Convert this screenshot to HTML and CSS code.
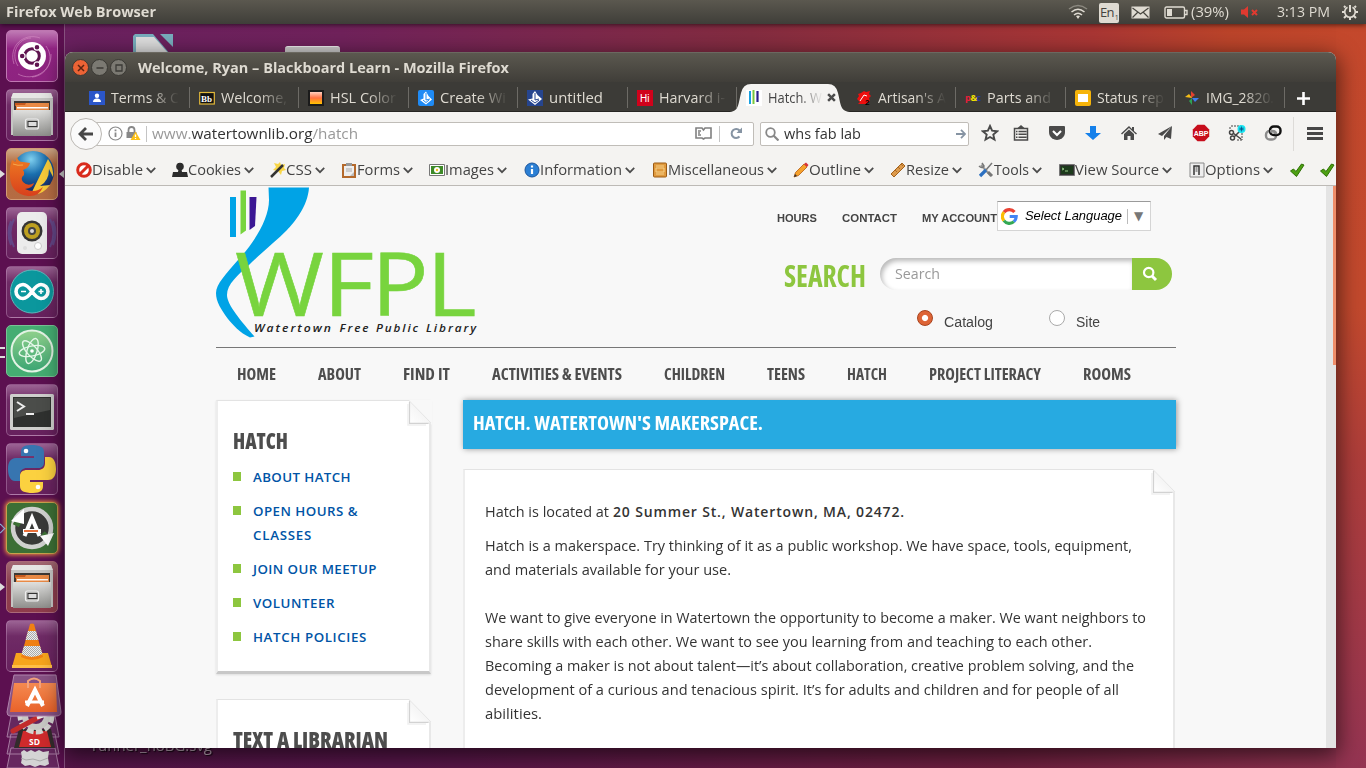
FILE: index.html
```html
<!DOCTYPE html>
<html lang="en">
<head>
<meta charset="utf-8">
<title>Desktop</title>
<link rel="stylesheet" href="styles.css">
</head>
<body>
<svg width="0" height="0" class="defs">
  <defs>
    <linearGradient id="silver" x2="0" y2="1"><stop stop-color="#e0e0de"/><stop offset="1" stop-color="#8f8f8c"/></linearGradient>
    <linearGradient id="orange" x2="0" y2="1"><stop stop-color="#f58a50"/><stop offset="1" stop-color="#e9622a"/></linearGradient>
    <linearGradient id="atom" x2="0" y2="1"><stop stop-color="#8fd08b"/><stop offset="1" stop-color="#3ba573"/></linearGradient>
    <linearGradient id="paper" x1="0" y1="1" x2=".6" y2=".4"><stop stop-color="#fff"/><stop offset="1" stop-color="#f3f3f3"/></linearGradient>
    <radialGradient id="globe" cx=".45" cy=".2" r=".8"><stop stop-color="#7fd0ef"/><stop offset=".45" stop-color="#1a6fae"/><stop offset="1" stop-color="#12235e"/></radialGradient>
    <linearGradient id="fox" x2="0" y2="1"><stop stop-color="#ee7b22"/><stop offset="1" stop-color="#d8401c"/></linearGradient>
    <pattern id="check" width="2" height="2" patternUnits="userSpaceOnUse"><rect width="2" height="2" fill="#eee"/><rect width="1" height="1" fill="#aaa"/><rect x="1" y="1" width="1" height="1" fill="#aaa"/></pattern>
    <symbol id="files" viewBox="0 0 52 52">
      <path d="M7 4h38l2 6v36H5V10z" fill="#c6c6c4"/><path d="M7 4h38l2 5H5z" fill="#e6e6e4"/>
      <path d="M8 12h36v12H8z" fill="#3d3935"/><path d="M9 14h34v3H9z" fill="#c65a1e"/><path d="M10 16h9l1-2h23v10H10z" fill="#e98a45"/><path d="M11 18h31v1.500H11z" fill="#fff"/>
      <path d="M7 21h38v26H7z" fill="url(#silver)"/><rect x="19.500" y="30" width="13" height="10" rx="2" fill="#b5b5b3" stroke="#eee" stroke-width="1.200"/><rect x="22" y="32.500" width="9" height="5" fill="#ddd" stroke="#333"/>
    </symbol>
    <symbol id="chev" viewBox="0 0 9 6"><path d="M.700.700l3.800 3.800L8.300.700" fill="none" stroke="#4c4c4c" stroke-width="1.600"/></symbol>
    <symbol id="tick" viewBox="0 0 16 16"><path d="M1.500 9l3-2 2.500 2.500L12.500 2l2.500 1L7.500 14.500z" fill="#4da012" stroke="#2d6f04"/></symbol>
    <symbol id="corner" viewBox="0 0 26 26"><path d="M3 0h23v25z" fill="#f8f8f8"/><path d="M3.500 1L25 23H3.500z" fill="url(#paper)" stroke="#e6e6e6"/><path d="M3.500 2v21.500h19" fill="none" stroke="#d2d2d2" stroke-width="1.200"/><path d="M2 4v21h18" fill="none" stroke="#f0f0f0" stroke-width="1.500"/></symbol>
  </defs>
</svg>

<div class="panel">
  <b class="fit" data-w="150">Firefox Web Browser</b>
  <div class="tray">
    <svg width="20" height="16" viewBox="0 0 20 16" fill="none" stroke="#dfdbd2" stroke-width="1.500"><path d="M1 5Q10-2 19 5" stroke="#8b887f"/><path d="M3.500 8Q10 2.500 16.500 8M6 11Q10 7.500 14 11"/><path d="M8 12l2 3 2-3q-2-1-4 0z" fill="#dfdbd2" stroke="none"/></svg>
    <span class="lang">En<small>1</small></span>
    <svg class="mail" width="19" height="13" viewBox="0 0 19 13"><path d="M.500.500h18v12H.500z" fill="#dfdbd2"/><path d="M1.500 2l8 6 8-6M1.500 11.500l5-5M17.500 11.500l-5-5" fill="none" stroke="#47453f" stroke-width="1.200"/></svg>
    <svg class="batt" width="24" height="13" viewBox="0 0 24 13" fill="none" stroke="#dfdbd2" stroke-width="1.400"><rect x="1" y="1" width="19.500" height="11" rx="1.500"/><path d="M21 4.500h2v4h-2"/><path d="M3 3h5v7H3z" fill="#dfdbd2" stroke="none"/></svg>
    <span class="fit pct" data-w="38">(39%)</span>
    <svg class="vol" width="18" height="12" viewBox="0 0 18 12" fill="#e03a30"><path d="M0 3.500h3L7 0v12L3 8.500H0z"/><path d="M11 4l5 5M16 4l-5 5" stroke="#e03a30" stroke-width="2"/></svg>
    <span class="fit time" data-w="53">3:13 PM</span>
    <svg class="gear" width="16" height="16" viewBox="0 0 16 16" fill="none" stroke="#dfdbd2"><path d="M10.500 3.300a5.300 5.300 0 1 1-5 0" stroke-width="1.700"/><path d="M8 1v7" stroke-width="2"/><path d="M3.500 3.500L2 2M12.500 3.500L14 2M2.500 8H0M16 8h-2.500M4 12l-2 2M12 12l2 2M8 13v3" stroke-width="2"/></svg>
  </div>
</div>

<div class="desk-icons">
  <svg width="40" height="20" viewBox="0 0 40 20"><path d="M0 20V2l2-2h18l17 20z" fill="#78adbd"/><path d="M3 20V3h18l15 17z" fill="#dedede"/><path d="M27 0h13v13z" fill="#78adbd"/></svg>
  <i class="drive"></i>
</div>
<div class="desk-label fit" data-w="120">runner_noBG.svg</div>

<div class="launcher">
  <div class="tile ubuntu"><svg viewBox="0 0 52 52"><g fill="none" stroke="#d58dc4" stroke-opacity=".6"><path d="M8 34C2 16 18 2 34 8M40 16c10 14 0 30-14 31M12 44c14 8 34-2 33-20M25 8C12 8 4 24 12 36"/></g><circle cx="26" cy="26" r="14" fill="#fff"/><circle cx="26" cy="26" r="7.300" fill="none" stroke="#5f1450" stroke-width="3"/><g fill="#5f1450" stroke="#fff" stroke-width="1.200"><circle cx="16.200" cy="26" r="2.900"/><circle cx="31" cy="17.300" r="2.900"/><circle cx="31" cy="34.700" r="2.900"/></g></svg></div>
  <div class="tile"><svg viewBox="0 0 52 52"><use href="#files"/></svg></div>
  <div class="tile brown focus"><svg viewBox="0 0 52 52"><circle cx="27" cy="24" r="21" fill="url(#globe)"/><path d="M42 11q6 9 5 18l-4-8q0 12-9 17l10-1Q36 48 25 46z" fill="#f8cb3a"/><path d="M6 12l3 2 2-5q1 5 6 5l7 1q-1 5-7 7 2 2 1 5-4 3-1 7 5 5 11 1-1 5-9 6 10 5 18-2-4 10-15 9Q5 46 4 29 3 20 6 12z" fill="url(#fox)"/><path d="M7 16q5 2 10 1" stroke="#f8a94b" fill="none"/></svg></div>
  <div class="tile"><svg viewBox="0 0 52 52"><path d="M8 12q-7 14 0 28M44 12q7 14 0 28M5 14q-5 12 0 24M47 14q5 12 0 24" fill="none" stroke="#5d5a9c" stroke-opacity=".6" stroke-width="2"/><rect x="11" y="5" width="30" height="42" rx="5" fill="#ececec"/><circle cx="26" cy="24" r="10.500" fill="#353535"/><circle cx="26" cy="24" r="8" fill="#bda021"/><circle cx="26" cy="24" r="4" fill="#444"/><circle cx="26" cy="24" r="2" fill="#d9d9d9"/><circle cx="32" cy="39" r="3.500" fill="#fff" stroke="#ccc"/><circle cx="19" cy="41" r="2" fill="#ddd"/></svg></div>
  <div class="tile"><svg viewBox="0 0 52 52"><circle cx="26" cy="25.500" r="21.500" fill="#0b979d" stroke="#5ab9bb"/><path d="M26 25.500q-5-7-9-7a7 7 0 0 0 0 14q4 0 9-7t9-7a7 7 0 0 1 0 14q-4 0-9-7z" fill="none" stroke="#fff" stroke-width="3.600"/><path d="M15 25.500h5M32.500 25.500h5M35 23v5" stroke="#fff" stroke-width="1.600"/></svg></div>
  <div class="tile green multi"><svg viewBox="0 0 52 52"><circle cx="26" cy="26" r="20.500" fill="url(#atom)" stroke="#e3f3e4" stroke-width="2"/><g fill="none" stroke="#e5f7e9" stroke-width="1.400"><ellipse cx="26" cy="26" rx="13" ry="5" transform="rotate(-12 26 26)"/><ellipse cx="26" cy="26" rx="13" ry="5" transform="rotate(48 26 26)"/><ellipse cx="26" cy="26" rx="13" ry="5" transform="rotate(108 26 26)"/></g><circle cx="26" cy="26" r="1.800" fill="#fff"/></svg></div>
  <div class="tile"><svg viewBox="0 0 52 52"><rect x="4" y="10" width="44" height="36" rx="1.500" fill="#cfcfcd"/><rect x="7" y="13" width="38" height="30" fill="#2f312f"/><path d="M8 14h36v12L8 34z" fill="#4b4d4a"/><path d="M11 18l7 4.500-7 4.500" fill="none" stroke="#eee" stroke-width="2"/><path d="M20 30h8" stroke="#eee" stroke-width="2"/></svg></div>
  <div class="tile"><svg viewBox="0 0 52 52"><path d="M25 2c-8 0-10 3-10 7v4h13v2H10c-6 0-8 5-8 11s2 12 7 12h5v-6c0-5 3-7 7-7h11c4 0 6-2 6-6V9c0-5-4-7-13-7z" fill="#3775b0"/><path d="M27 50c8 0 10-3 10-7v-4H24v-2h18c6 0 8-5 8-11s-2-12-7-12h-4v6c0 5-3 7-7 7H21c-4 0-7 2-7 6v10c0 5 4 7 13 7z" fill="#fbd140"/><circle cx="20" cy="8" r="2.300" fill="#fff"/><circle cx="32" cy="44" r="2.300" fill="#fff"/></svg></div>
  <div class="tile updater"><svg viewBox="0 0 52 52"><circle cx="26" cy="26" r="19" fill="#393a38" stroke="#d0d1cf" stroke-width="4.500"/><path d="M8 20l6 3M37 31l5 5" stroke="#3c6f35" stroke-width="5"/><path d="M18 7L5 19l13 3zM48 31l-14 3 8 10z" fill="#fff"/><path d="M18.500 34L26 16l7.500 18" fill="none" stroke="#fff" stroke-width="4"/><path d="M17 29h18" stroke="#fff" stroke-width="4"/><path d="M18 29h14" stroke="#e9713b" stroke-width="2"/></svg></div>
  <div class="tile rose arrow"><svg viewBox="0 0 52 52"><use href="#files"/></svg></div>
  <div class="tile"><svg viewBox="0 0 52 52"><path d="M10 33h32l4 14H6z" fill="#f7a51c"/><path d="M6 45h40v3H6z" fill="#ffbf45"/><path d="M24 4q2-1 4 0l9 33q-11 6-22 0z" fill="#f08013"/><path d="M22 11h8l2.500 9h-13zM18 26h16l2.500 8q-11 6-21 0z" fill="url(#check)"/></svg></div>
  <svg class="stack" width="60" height="96" viewBox="0 0 60 96">
    <g fill="#6f3d6b" fill-opacity=".55" stroke="#a77aa2"><path d="M8 74h44l4 20H4zM8 60h44l4 20H4zM8 42h44l4 21H4z"/></g>
    <path d="M18 78l3-2 3 2 4-2 4 2 4-2 4 2 6-1-1 7 1 6-4 2-5-1-5 2-5-2-5 1-4-3 1-5z" fill="#d4d4d4"/><path d="M18 84l5 2 7-1 7 2 8-3" stroke="#aaa" fill="none"/>
    <path d="M16 55h32l4 19H11z" fill="#332c2c"/><path d="M20 57h24l4 16H16z" fill="#cf2a2c"/><text x="26" y="71" fill="#fff" class="sd">SD</text>
    <circle cx="33" cy="42" r="14" fill="none" stroke="#d4d4d0" stroke-width="9" stroke-dasharray="6 2"/><circle cx="33" cy="42" r="11" fill="none" stroke="#c8c8c4" stroke-width="6"/><path d="M10 57l26-14" stroke="#c22b2b" stroke-width="5" stroke-linecap="round"/><path d="M34 44l12-4 4 1" stroke="#e8e8e8" stroke-width="3" fill="none"/>
    <path d="M11 1h42l5 37q0 4-5 4H7q-3 0-3-4z" fill="#875184" stroke="#b084ac"/>
    <path d="M11 9h42l1 29H7z" fill="url(#orange)"/><path d="M25 14V7q6-5 12 0v7" fill="none" stroke="#f4a27c" stroke-width="2"/><path d="M24 32l8-16 8 16" fill="none" stroke="#fff" stroke-width="4"/><path d="M22 28h19" stroke="#fff" stroke-width="3"/>
  </svg>
</div>

<div class="window">
  <div class="titlebar">
    <i class="wb close"><svg viewBox="0 0 16 16"><path d="M5 5l6 6M11 5l-6 6" stroke="#5b2411" stroke-width="1.500"/></svg></i>
    <i class="wb"><svg viewBox="0 0 16 16"><path d="M4.500 8h7" stroke="#3b3a36" stroke-width="1.500"/></svg></i>
    <i class="wb"><svg viewBox="0 0 16 16"><path d="M5 5h6v6H5z" stroke="#3b3a36" stroke-width="1.300" fill="none"/></svg></i>
    <b class="fit" data-w="371">Welcome, Ryan – Blackboard Learn - Mozilla Firefox</b>
  </div>

  <div class="tabs">
    <div class="tab"><svg viewBox="0 0 16 16"><path d="M0 1h16v14H0z" fill="#2b56c8"/><circle cx="8" cy="5.800" r="2.200" fill="#fff"/><path d="M4 12q0-3.500 4-3.500t4 3.500z" fill="#fff"/></svg><span class="lbl"><span class="fit" data-w="68">Terms &amp; C</span></span></div>
    <div class="tab"><svg viewBox="0 0 16 16"><rect x=".700" y="2.500" width="14.600" height="11.500" fill="#111" stroke="#e3b93a" stroke-width="1.200"/><text x="2" y="12" class="bb">Bb</text></svg><span class="lbl"><span class="fit" data-w="66">Welcome,</span></span></div>
    <div class="tab"><svg viewBox="0 0 16 16"><defs><linearGradient id="hsl" x2="0" y2="1"><stop stop-color="#ffd0c0"/><stop offset=".5" stop-color="#ff7040"/><stop offset="1" stop-color="#ffc400"/></linearGradient></defs><path d="M0 0h16v16H0z" fill="#1b1b1b"/><path d="M2 2h12v12H2z" fill="url(#hsl)"/></svg><span class="lbl"><span class="fit" data-w="66">HSL Color</span></span></div>
    <div class="tab"><svg viewBox="0 0 16 16"><rect width="16" height="16" rx="2" fill="#1f8bf5"/><path d="M8 1.500L5.500 4v4.500L2 10l6 4.500 6-5L10.500 6z" fill="#fff"/><path d="M8 3v7l4-1M5 10l3 2.500L11 10" stroke="#1f8bf5" fill="none"/></svg><span class="lbl"><span class="fit" data-w="66">Create Wi</span></span></div>
    <div class="tab"><svg viewBox="0 0 16 16"><path d="M0 0h16v16H0z" fill="#26458f"/><path d="M8 1L5.500 4v4.500L1 9.500 8 15l7-6-4.500-4z" fill="#fff"/><path d="M8 3v7l4-1M4 10l4 3 4-3" stroke="#26458f" fill="none"/></svg><span class="lbl full"><span class="fit" data-w="54">untitled</span></span></div>
    <div class="tab"><svg viewBox="0 0 16 16"><path d="M0 0h16v16H0z" fill="#d0021b"/><text x="3" y="12" class="hi">Hi</text></svg><span class="lbl"><span class="fit" data-w="66">Harvard i-</span></span></div>
    <div class="tab active"><svg class="shape" width="124" height="29" viewBox="0 0 124 29"><path d="M0 29C11 29 10 22 13 10Q15 1 23 1h77q8 0 10 9c3 12 2 19 14 19z" fill="#f4f3f1"/></svg><svg viewBox="0 0 16 16"><path d="M0 0h16v16H0z" fill="#fff"/><path d="M4 1v13" stroke="#18a0e0" stroke-width="2"/><path d="M7.500 0v14" stroke="#78c83c" stroke-width="2"/><path d="M11.500 1v11" stroke="#29228a" stroke-width="2.200"/></svg><span class="lbl"><span class="fit" data-w="54">Hatch. W</span></span><svg class="x" viewBox="0 0 8 8"><path d="M1 1l6 6M7 1L1 7" stroke="#4d4d4d" stroke-width="2.200"/></svg></div>
    <div class="tab"><svg viewBox="0 0 16 16"><path d="M1 9l2-3-1-2 3-1 3-2 2 1 4-1-1 3 2 2-2 2 1 3-4 3H2l2-2z" fill="#ee0f0f"/><path d="M4 11l4-6 3 1" stroke="#fff" fill="none"/><text x="9" y="15" class="two">2</text></svg><span class="lbl"><span class="fit" data-w="68">Artisan's A</span></span></div>
    <div class="tab"><svg viewBox="0 0 16 16" class="pc"><text x="0" y="11" fill="#e8203a">p</text><text x="5.500" y="11" fill="#f5e400">&amp;</text><text x="11.500" y="11" fill="#2a3d9c">c</text></svg><span class="lbl"><span class="fit" data-w="64">Parts and</span></span></div>
    <div class="tab"><svg viewBox="0 0 16 16"><rect width="16" height="16" rx="2" fill="#f6b40a"/><path d="M3 4h10v8H3z" fill="#fff"/></svg><span class="lbl"><span class="fit" data-w="67">Status rep</span></span></div>
    <div class="tab"><svg viewBox="0 0 16 16"><path d="M7 1l4 4-4 3z" fill="#e4412f"/><path d="M15 8l-4 4-3-4z" fill="#3f7ff0"/><path d="M8 15l-3-4 3-3z" fill="#2ea254"/><path d="M1 7l4-3 3 4z" fill="#f6bd16"/></svg><span class="lbl"><span class="fit" data-w="68">IMG_2820.</span></span></div>
    <div class="plus"><svg width="13" height="13" viewBox="0 0 13 13"><path d="M6.500 0v13M0 6.500h13" stroke="#fff" stroke-width="2.600"/></svg></div>
  </div>

  <div class="nav">
    <div class="back"><svg width="16" height="16" viewBox="0 0 16 16"><path d="M8 2L2 8l6 6M2 8h13" fill="none" stroke="#474747" stroke-width="2.800"/></svg></div>
    <div class="url">
      <svg width="15" height="15" viewBox="0 0 15 15" fill="none" stroke="#8a8a8a"><circle cx="7.500" cy="7.500" r="6.500" stroke-width="1.200"/><path d="M7.500 6.500V11M7.500 3.500v1.700" stroke-width="1.800"/></svg>
      <svg class="lock" width="15" height="15" viewBox="0 0 15 15"><path d="M2.500 6V4q0-3 3-3t3 3v2" fill="none" stroke="#888" stroke-width="1.800"/><path d="M.500 6h10v6H.500z" fill="#888"/><path d="M9.500 5.500l5 8.500h-10z" fill="#fcc016"/><path d="M9.500 8.500v2.500M9.500 12v1" stroke="#fff" stroke-width="1.300"/></svg>
      <i class="vl"></i>
      <span class="addr fit" data-w="206">www.<em>watertownlib.org</em>/hatch</span>
      <svg class="book" width="17" height="13" viewBox="0 0 17 13" fill="none" stroke="#808080" stroke-width="1.600"><path d="M8.500 3L7 1H1v10h6l1.500 1L10 11h6V1h-6zM3 4h3M3 6h2M3 8h3"/></svg>
      <i class="vl"></i>
      <svg class="reload" width="13" height="13" viewBox="0 0 13 13"><path d="M9.500 9.500A4.500 4.500 0 1 1 9.500 3.500" fill="none" stroke="#8694a3" stroke-width="2"/><path d="M12 .500V6H6.500z" fill="#8694a3"/></svg>
    </div>
    <div class="find"><svg width="14" height="14" viewBox="0 0 14 14" fill="none" stroke="#888"><circle cx="5.500" cy="5.500" r="4.300" stroke-width="1.800"/><path d="M8.500 8.500l5 5" stroke-width="2.200"/></svg><span class="fit" data-w="77">whs fab lab</span><svg class="go" width="10" height="10" viewBox="0 0 10 10"><path d="M5 .800L9 5 5 9.200M0 5h9" fill="none" stroke="#8694a3" stroke-width="1.800"/></svg></div>
    <div class="tools">
      <svg viewBox="0 0 18 18"><path d="M9 2l2.100 4.700 5.100.500-3.900 3.400 1.200 5L9 13l-4.500 2.600 1.200-5-3.900-3.400 5.100-.500z" fill="none" stroke="#4a4a4a" stroke-width="1.900"/></svg>
      <svg class="list" viewBox="0 0 18 18" fill="none" stroke="#4a4a4a" stroke-width="1.500"><path d="M2.500 4.500h13V16h-13zM6.500 7.500h8M6.500 10.300h8M6.500 13.200h8M4 7.500h1.500M4 10.300h1.500M4 13.200h1.500"/><path d="M5 4.500L9 1l4 3.500" fill="#4a4a4a" stroke="none"/></svg>
      <svg viewBox="0 0 18 18"><path d="M1 3q0-1 1-1h14q1 0 1 1v5q0 4-3 6.200-5 3.600-10 0Q1 12 1 8z" fill="#4a4a4a"/><path d="M5 7l4 4 4-4" fill="none" stroke="#fff" stroke-width="2.100"/></svg>
      <svg viewBox="0 0 18 18"><path d="M6 2h6v7h5l-8 7-8-7h5z" fill="#1580ea"/></svg>
      <svg viewBox="0 0 18 18" fill="#4a4a4a"><path d="M1 9.500L9 2l3 3V3h2v4l3 2.500-1 1L9 4 2 10.500z"/><path d="M4 10l5-4.500 5 4.500v6h-3.500v-4h-3v4H4z"/></svg>
      <svg viewBox="0 0 18 18"><path d="M16 2L2 10l4 2zM16 2l-8 10v4l2.500-3 4.500 2z" fill="#4a4a4a"/></svg>
      <svg viewBox="0 0 18 18"><path d="M5.500.800h7l4.700 4.700v7l-4.700 4.700h-7L.800 12.500v-7z" fill="#c70d1c"/><text x="1.700" y="11.800" class="abp">ABP</text></svg>
      <svg viewBox="0 0 18 18" fill="none" stroke="#444"><path d="M3 2h10M2 3v3M14 9v7M9 16h6" stroke-dasharray="2 1"/><circle cx="3.500" cy="8.500" r="2" stroke-width="1.500"/><circle cx="4.500" cy="14" r="2" stroke-width="1.500"/><path d="M5 9l8 6M6 13l6-6" stroke-width="1.500"/><circle cx="13.500" cy="5" r="4" fill="#18e5f2" stroke="none"/><path d="M13.500 2.500v5M11 5h5M12 3.500l3 3M15 3.500l-3 3" stroke="#0a4f88" stroke-width=".8"/></svg>
      <svg viewBox="0 0 18 18" fill="none" stroke-width="2.400"><rect x="2" y="7" width="10" height="8.500" rx="3.800" stroke="#8c8c8c"/><rect x="6" y="2.500" width="10.500" height="8.500" rx="3.800" stroke="#111"/><path d="M6 7.200h3.500q2.500.300 2.500 3" stroke="#8c8c8c"/></svg>
    </div>
    <i class="sep"></i>
    <svg class="menu" width="16" height="13" viewBox="0 0 16 13"><path d="M0 1.500h16M0 6.500h16M0 11.500h16" stroke="#474747" stroke-width="2.800"/></svg>
  </div>

  <div class="devbar">
    <div class="d w96"><svg viewBox="0 0 16 16"><circle cx="8" cy="8" r="6.300" fill="#fff" stroke="#d92b1c" stroke-width="3"/><path d="M4 12l8-8" stroke="#d92b1c" stroke-width="3"/></svg><span class="fit" data-w="51">Disable</span><svg class="c"><use href="#chev"/></svg></div>
    <div class="d w98"><svg viewBox="0 0 16 16" fill="#2c2c2c"><circle cx="8" cy="4.500" r="3.800"/><path d="M6.500 7h3l.5 3h5l1 5H0l1-5h5z"/></svg><span class="fit" data-w="53">Cookies</span><svg class="c"><use href="#chev"/></svg></div>
    <div class="d w71"><svg viewBox="0 0 16 16"><path d="M10 0l1 3 4-1-1 4 2 2-4 1-1 4-3-4-5-1 3-3-2-4 4 1z" fill="#f8d648"/><path d="M1 15L13 3" stroke="#333" stroke-width="2.500"/></svg><span class="fit" data-w="26">CSS</span><svg class="c"><use href="#chev"/></svg></div>
    <div class="d w88"><svg viewBox="0 0 16 16"><path d="M1 2h14v14H1z" fill="#b4692b"/><path d="M3 4h10v10H3z" fill="#eee"/><path d="M5 1h6v3H5z" fill="#999"/><path d="M5 7h6M5 9h6" stroke="#aaa"/><path d="M9 14l4-4v4z" fill="#bbb"/></svg><span class="fit" data-w="43">Forms</span><svg class="c"><use href="#chev"/></svg></div>
    <div class="d w95"><svg viewBox="0 0 16 16"><path d="M.500 2.500h15v11H.500z" fill="#fff" stroke="#777"/><path d="M2 4h12v8H2z" fill="#3e8a28"/><circle cx="8" cy="8" r="3" fill="#fff"/><circle cx="8" cy="8" r="1.200" fill="#f0c020"/></svg><span class="fit" data-w="49">Images</span><svg class="c"><use href="#chev"/></svg></div>
    <div class="d w128"><svg viewBox="0 0 16 16"><circle cx="8" cy="8" r="7" fill="#2b7fd4" stroke="#1b559c"/><path d="M8 7v5M8 3.500v2" stroke="#fff" stroke-width="2.200"/></svg><span class="fit" data-w="82">Information</span><svg class="c"><use href="#chev"/></svg></div>
    <div class="d w141"><svg viewBox="0 0 16 16"><rect x="1.500" y="1" width="13" height="14" rx="1" fill="#e09a3e" stroke="#9c5a12"/><path d="M4 4h8M4 12h8M4 6h8v4H4z" stroke="#f6d088" fill="none"/></svg><span class="fit" data-w="96">Miscellaneous</span><svg class="c"><use href="#chev"/></svg></div>
    <div class="d w97"><svg viewBox="0 0 16 16"><path d="M1 15l1.500-4.500L11 2l3 3-8.500 8.500z" fill="#f5a12c" stroke="#b55c10" stroke-width=".8"/><path d="M11 2l2-1.500 2.500 2.500L14 5z" fill="#d9333a"/><path d="M1 15l1-3 2 2z" fill="#333"/></svg><span class="fit" data-w="52">Outline</span><svg class="c"><use href="#chev"/></svg></div>
    <div class="d w88"><svg viewBox="0 0 16 16"><path d="M1 12L12 1l3 3L4 15z" fill="#dd9a4c" stroke="#a3621c"/><path d="M5 8l2 2M8 5l2 2M11 2l2 2" stroke="#a3621c" stroke-width=".8"/></svg><span class="fit" data-w="43">Resize</span><svg class="c"><use href="#chev"/></svg></div>
    <div class="d w81"><svg viewBox="0 0 16 16" fill="none"><path d="M3 3l10 11" stroke="#999" stroke-width="2.200"/><path d="M1 4q3 3 5 0l-2-3" stroke="#777" stroke-width="1.500"/><path d="M14 1L8 8" stroke="#777" stroke-width="1.500"/><path d="M8 8l-6 6" stroke="#2b6fc0" stroke-width="3.200"/><path d="M10 10l4 4" stroke="#777" stroke-width="3"/></svg><span class="fit" data-w="35">Tools</span><svg class="c"><use href="#chev"/></svg></div>
    <div class="d w130"><svg viewBox="0 0 16 16"><path d="M.500 2.500h15v11H.500z" fill="#333" stroke="#777"/><path d="M2 4h12v8H2z" fill="#1d3a1c"/><path d="M3 6l2 1-2 1M6 9h3" stroke="#9bd08d" fill="none"/></svg><span class="fit" data-w="84">View Source</span><svg class="c"><use href="#chev"/></svg></div>
    <div class="d w100"><svg viewBox="0 0 16 16"><path d="M1 1h14v14H1z" fill="#eee" stroke="#888"/><path d="M5 13V4h5v9" fill="none" stroke="#333" stroke-width="1.500"/><path d="M7.500 5v5" stroke="#999" stroke-width="2"/></svg><span class="fit" data-w="55">Options</span><svg class="c"><use href="#chev"/></svg></div>
    <div class="d w30"><svg><use href="#tick"/></svg></div>
    <div class="d"><svg><use href="#tick"/></svg></div>
  </div>

  <div class="view">
    <div class="page">
      <div class="head">
        <svg class="logo" width="264" height="161" viewBox="216 186 264 161">
          <path d="M268.500 187.500H309C308 206 294 223 287 230C275 242 262 252 249 265C238 275 227 284 227 295C227 305 242 322 254.500 336.500L250 337.500C240 333 232 324 228 319C221 309 216 302 216 293C216 284 226 274 238 260C254 243 269 219 269 200Z" fill="#00a3e6"/>
          <path d="M230 197h6v40h-6z" fill="#00a3e6"/><path d="M240.500 190.500h5.500v40l-5.500 4z" fill="#78d43e"/><path d="M249.500 197h7l-1.500 29-5.500 4z" fill="#3b1794"/>
          <g class="wfpl"><text x="235" y="315.500" textLength="89" lengthAdjust="spacingAndGlyphs">W</text><text x="323" y="315.500" textLength="51" lengthAdjust="spacingAndGlyphs">F</text><text x="371.500" y="315.500" textLength="57" lengthAdjust="spacingAndGlyphs">P</text><text x="426.500" y="315.500" textLength="50" lengthAdjust="spacingAndGlyphs">L</text></g>
          <g class="tag"><text x="254" y="332" textLength="79" lengthAdjust="spacingAndGlyphs">Watertown</text><text x="339.500" y="332" textLength="31" lengthAdjust="spacingAndGlyphs">Free</text><text x="376" y="332" textLength="44" lengthAdjust="spacingAndGlyphs">Public</text><text x="426" y="332" textLength="52" lengthAdjust="spacingAndGlyphs">Library</text></g>
        </svg>
        <div class="util">
          <div class="links"><b class="fit" data-w="40">HOURS</b><b class="fit" data-w="55">CONTACT</b><b class="fit" data-w="75">MY ACCOUNT</b>
            <div class="lang-sel"><svg width="17" height="17" viewBox="0 0 17 17" fill="none" stroke-width="3.200"><path d="M13.500 4A6.800 6.800 0 0 0 3 4.300" stroke="#ea4335"/><path d="M3 4.300a6.800 6.800 0 0 0-.100 8.300" stroke="#fbbc05"/><path d="M2.900 12.600a6.800 6.800 0 0 0 10 1" stroke="#34a853"/><path d="M12.900 13.600q2.200-2 2.300-5.100H8.700" stroke="#4285f4"/></svg><i class="fit" data-w="97">Select Language</i><s></s><u>▼</u></div></div>
          <div class="search"><b class="fit cond" data-w="82">SEARCH</b><div class="box"><span class="fit" data-w="45">Search</span></div><div class="btn"><svg width="16" height="16" viewBox="0 0 16 16" fill="none" stroke="#fff"><circle cx="6.700" cy="6.500" r="4.700" stroke-width="2.200"/><path d="M10 10l4 4" stroke-width="3"/></svg></div></div>
          <div class="radios"><i class="rad on"></i><span class="fit" data-w="49">Catalog</span><i class="rad two-r"></i><span class="fit" data-w="24">Site</span></div>
        </div>
      </div>
      <div class="menu-row cond"><b class="fit" data-w="39">HOME</b><b class="fit" data-w="43">ABOUT</b><b class="fit" data-w="47">FIND IT</b><b class="fit" data-w="130">ACTIVITIES &amp; EVENTS</b><b class="fit" data-w="61">CHILDREN</b><b class="fit" data-w="38">TEENS</b><b class="fit" data-w="40">HATCH</b><b class="fit" data-w="112">PROJECT LITERACY</b><b class="fit" data-w="48">ROOMS</b></div>
      <div class="cols">
        <div class="side">
          <div class="card c1"><svg class="fold"><use href="#corner"/></svg>
            <h2 class="cond"><b class="fit" data-w="55">HATCH</b></h2>
            <ul><li><span class="fit ls" data-w="98">ABOUT HATCH</span></li><li><span class="fit ls" data-w="105">OPEN HOURS &amp;</span><br><span class="fit ls" data-w="59">CLASSES</span></li><li><span class="fit ls" data-w="124">JOIN OUR MEETUP</span></li><li><span class="fit ls" data-w="82">VOLUNTEER</span></li><li><span class="fit ls" data-w="114">HATCH POLICIES</span></li></ul>
          </div>
          <div class="card c2"><svg class="fold"><use href="#corner"/></svg>
            <h2 class="cond"><b class="fit" data-w="155">TEXT A LIBRARIAN</b></h2>
          </div>
        </div>
        <div class="main">
          <div class="banner cond"><b class="fit" data-w="290">HATCH. WATERTOWN'S MAKERSPACE.</b></div>
          <div class="card article"><svg class="fold"><use href="#corner"/></svg>
            <p class="p1"><span class="fit" data-w="124">Hatch is located at</span><b class="fit ls" data-w="292">20 Summer St., Watertown, MA, 02472.</b></p>
            <p class="p2"><span class="fit" data-w="647">Hatch is a makerspace. Try thinking of it as a public workshop. We have space, tools, equipment,</span><br><span class="fit" data-w="246">and materials available for your use.</span></p>
            <p><span class="fit" data-w="661">We want to give everyone in Watertown the opportunity to become a maker. We want neighbors to</span><br><span class="fit" data-w="607">share skills with each other. We want to see you learning from and teaching to each other.</span><br><span class="fit" data-w="649">Becoming a maker is not about talent—it’s about collaboration, creative problem solving, and the</span><br><span class="fit" data-w="634">development of a curious and tenacious spirit. It’s for adults and children and for people of all</span><br><span class="fit" data-w="57">abilities.</span></p>
          </div>
        </div>
      </div>
    </div>
    <div class="scroll"><i></i></div>
  </div>
</div>
<script src="fit.js"></script>
</body>
</html>
```
FILE: styles.css
```css
* { box-sizing: border-box; }
html, body { margin: 0; height: 100%; overflow: hidden; }
body {
  position: relative; width: 1366px; height: 768px;
  font: 14.5px/20px "Open Sans", "Noto Sans", sans-serif;
  background:
    linear-gradient(90deg, #551549 0, #58164a 30%, #702040 75%, #903350 100%) left bottom / 1336px 100px no-repeat,
    linear-gradient(#c4482c 0, #c2492d 40%, #ad3d3a 60%, #943452 100%) right top / 30px 768px no-repeat,
    linear-gradient(90deg, #682060 0, #70225b 25%, #842c40 55%, #a93634 80%, #bb442a 90%, #c4482c 100%);
}
.defs { position: absolute; }
svg { display: block; flex: none; }
.fit { display: inline-block; white-space: nowrap; flex: none; }
.cond { font-family: "Open Sans", sans-serif; font-stretch: 75%; }

.panel { display: flex; align-items: center; justify-content: space-between; height: 24px; padding: 0 8px 0 6px; color: #dfdbd2; background: linear-gradient(#5b584f, #3f3e39); box-shadow: 0 1px 5px rgba(0,0,0,.6); position: relative; z-index: 3; font-size: 14px; }
.tray { display: flex; align-items: center; }
.lang { margin: 2px 12px 0 11px; width: 20px; height: 20px; border-radius: 2px; background: #dfdbd2; color: #45433e; font-size: 13px; padding-left: 1px; line-height: 19px; white-space: nowrap; letter-spacing: -.7px; }
.lang small { font-size: 7px; vertical-align: -3px; margin-left: 1px; }
.batt { margin: 0 3px 0 14px; }
.pct { font-size: 14.5px; }
.vol { margin: 0 18px 0 12px; }
.gear { margin-left: 12px; }

.desk-icons { position: absolute; left: 133px; top: 34px; display: flex; gap: 112px; }
.drive { width: 55px; height: 20px; margin-top: 12px; border-radius: 3px; background: #cfcdcd; border-top: 1px solid #f0f0f0; }
.desk-label { position: absolute; left: 92px; top: 736px; color: #e8e0e4; opacity: .75; text-shadow: 1px 1px 1px #000; }

.launcher { position: absolute; left: 0; top: 24px; width: 65px; height: 744px; padding: 6px 0 0 6px; display: flex; flex-direction: column; gap: 7px; background: #5c1050; border-right: 1px solid #87527f; }
.tile { width: 52px; height: 52px; border-radius: 5px; flex: none; position: relative; border: 1px solid rgba(205,160,200,.4); background: linear-gradient(rgba(190,145,185,.65), rgba(140,85,135,.4) 30%, rgba(125,65,120,.35)); }
.tile svg { width: 52px; height: 52px; margin: -1px; }
.ubuntu { background: linear-gradient(#c07bb5, #912483 35%, #8e2380); border-color: #c077b3; }
.brown { background: linear-gradient(#cfa987, #b2693f 30%, #b56c43); border-color: #d29b75; }
.green { background: #45ad72; border-color: #78c395; }
.updater { background: #3c6f35; border-color: #c8a24c; box-shadow: 0 0 4px 1px #ee8e42; }
.rose { background: linear-gradient(#a26973, #8c3e50 40%, #8f3c4b); border-color: #ab6978; }
.focus::before, .arrow::before { content: ""; position: absolute; left: -7px; top: 21px; border: 4px solid transparent; border-left: 5px solid #ddd; border-right: 0; }
.focus::after { content: ""; position: absolute; right: -7px; top: 21px; border: 4px solid transparent; border-right: 5px solid #ddd; border-left: 0; }
.multi::before { content: ""; position: absolute; left: -7px; top: 21px; width: 5px; height: 7px; border: solid #ddd; border-width: 2px 0; }
.updater::before { content: ""; position: absolute; left: -10px; top: 22px; width: 6px; height: 6px; border: solid #88b3d9; border-width: 1px 1px 0 0; transform: rotate(45deg); }
.stack { margin: -5px 0 0 -3px; }
.sd { font: bold 8.5px "Open Sans", sans-serif; }

.window { position: absolute; left: 65px; top: 52px; width: 1271px; height: 696px; display: flex; flex-direction: column; border-radius: 8px 8px 0 0; overflow: hidden; background: #f4f3f1; box-shadow: 0 6px 22px 2px rgba(0,0,0,.6); }
.titlebar { height: 30px; flex: none; display: flex; align-items: center; padding-left: 7px; color: #dfdbd2; background: linear-gradient(#5b584f, #403e39); border-top: 1px solid #6b6860; font-size: 14px; }
.wb { width: 17px; height: 17px; border-radius: 50%; background: #7b7972; border: 1px solid #3a3934; margin-right: 2px; }
.wb svg { margin: -.5px; width: 16px; height: 16px; }
.close { background: #ec6335; }
.titlebar b { margin-left: 9px; }
.tabs { height: 30px; flex: none; display: flex; padding-left: 15px; background: #3c3b37; border-bottom: 1px solid #262522; }
.tab { width: 109.5px; height: 29px; flex: none; padding: 2px 0 0 9px; display: flex; align-items: center; position: relative; color: #dfdbd2; border-right: 1px solid transparent; }
.tab::after { content: ""; position: absolute; right: -1px; top: 5px; width: 1px; height: 21px; background: #6d6b66; }
.tab > svg { width: 16px; height: 16px; margin-right: 6px; }
.lbl { width: 68px; overflow: hidden; -webkit-mask: linear-gradient(90deg, #000 55%, transparent); mask: linear-gradient(90deg, #000 55%, transparent); }
.full { -webkit-mask: none; mask: none; }
.active { color: #444; z-index: 1; }
.active::after { display: none; }
.active .lbl { width: 55px; }
.tab > .shape { position: absolute; left: -9px; top: 1px; width: 124px; height: 29px; }
.tab > svg:not(.shape), .lbl { position: relative; }
.tab > svg.x { width: 9px; height: 9px; margin: 0 0 0 4px; }
.plus { padding: 10px 0 0 12px; }
.bb { font: bold 9px "Liberation Serif", serif; fill: #fff; }
.hi { font: 10px "Liberation Sans", sans-serif; fill: #fff; }
.two { font: bold 8px "Liberation Sans", sans-serif; fill: #000; }
.pc { font: bold 9px "Open Sans", sans-serif; }

.nav { height: 43px; flex: none; display: flex; align-items: center; padding-left: 5px; }
.back { width: 32px; height: 32px; border-radius: 50%; border: 1px solid #bbb8b3; background: #fafafa; display: grid; place-items: center; z-index: 1; }
.url { margin-left: -8px; width: 660px; height: 24px; border: 1px solid #c0bdb8; border-radius: 2px; background: #fff; display: flex; align-items: center; padding-left: 13px; }
.lock { margin-left: 3px; }
.vl { width: 1px; height: 16px; background: #c4c4c4; margin: 0 5px; }
.addr { color: #999; }
.addr em { font-style: normal; color: #333; }
.book { margin: 0 2px 0 auto; }
.reload { margin: 0 10px 0 5px; }
.find { margin-left: 6px; width: 209px; height: 24px; border: 1px solid #c0bdb8; border-radius: 2px; background: #fff; display: flex; align-items: center; padding: 0 2px 0 4px; color: #333; }
.find > span { margin-left: 5px; }
.go { margin-left: auto; }
.tools { display: flex; gap: 18px; margin: -1px 0 0 12px; }
.tools svg { width: 18px; height: 18px; }
.tools .list { margin: 0 0 0 -5px; }
.abp { font: bold 7px "Liberation Sans", sans-serif; fill: #fff; }
.sep { width: 1px; height: 34px; margin: 0 13px 0 11px; background: #dddbd8; }

.devbar { height: 31px; flex: none; display: flex; align-items: center; padding: 0 0 0 10.5px; border-bottom: 1px solid #bdbab6; color: #444; }
.d { display: flex; align-items: center; flex: none; }
.d > svg { width: 16px; height: 16px; }
.d > svg.c { width: 10px; height: 7px; margin-left: 3px; }
.w96 { width: 96px; } .w98 { width: 98px; } .w71 { width: 71px; } .w88 { width: 88px; } .w95 { width: 95px; }
.w128 { width: 128px; } .w141 { width: 141px; } .w97 { width: 97px; } .w81 { width: 81px; } .w130 { width: 130px; }
.w100 { width: 100px; } .w30 { width: 30px; }

.view { flex: 1; min-height: 0; display: flex; justify-content: space-between; background: #f8f8f8; overflow: hidden; }
.page { width: 960px; margin-left: 151px; color: #333; }
.scroll { width: 10px; background: #e4e4e4; padding-left: 7px; }
.scroll i { display: block; height: 179px; background: #ef8e6a; }
.head { display: flex; height: 162px; border-bottom: 1px solid #777; }
.wfpl { font: 88px "Open Sans", sans-serif; fill: #78d43e; stroke: #78d43e; stroke-width: .6px; }
.tag { font: italic 600 11px "Open Sans", sans-serif; letter-spacing: 1.8px; fill: #222; }
.util { flex: 1; padding: 15px 0 0 297px; }
.links { display: flex; align-items: center; height: 30px; font: 11px/16px "Liberation Sans", Arial, sans-serif; color: #444; }
.links b { margin-top: 3px; }
.links b + b { margin-left: 25px; }
.lang-sel { display: flex; align-items: center; width: 154px; height: 30px; flex: none; padding-left: 3px; border: 1px solid #d5d5d5; border-top-color: #9b9b9b; background: #fff; font-size: 13px; color: #000; }
.lang-sel i { margin-left: 7px; }
.lang-sel s { width: 1px; height: 15px; background: #bbb; margin: 0 6px 0 5px; }
.lang-sel u { text-decoration: none; color: #777; font: 12px "DejaVu Sans", sans-serif; }
.search { display: flex; align-items: center; margin-top: 27px; padding-left: 7px; height: 32px; }
.search > b { color: #8dc63f; font-size: 30px; line-height: 32px; margin-top: 3px; }
.box { margin-left: 14px; width: 252px; height: 32px; flex: none; border-radius: 16px 0 0 16px; background: #fff; box-shadow: inset 2px 3px 5px rgba(0,0,0,.28); padding: 6px 15px; font-size: 14px; color: #999; }
.btn { width: 40px; height: 32px; flex: none; border-radius: 0 16px 16px 0; background: #8dc63f; padding: 8px 0 0 10px; }
.radios { display: flex; align-items: flex-start; margin: 20px 0 0 140px; font: 14px/20px "Liberation Sans", Arial, sans-serif; color: #444; }
.radios > span { margin: 2px 0 0 11px; }
.rad { width: 16px; height: 16px; flex: none; border-radius: 50%; background: #fff; border: 1px solid #aaa; }
.on { background: radial-gradient(circle, #fff 2.6px, #dd6436 3.6px); border-color: #a8421d; }
.two-r { margin-left: 56px; }
.menu-row { height: 52px; padding: 0 21px; display: flex; align-items: center; gap: 42px; font-size: 16.5px; color: #4d4d4d; }
.cols { display: flex; gap: 32px; }
.side { width: 215px; flex: none; }
.card { position: relative; background: #fff; border: 1px solid #e3e3e3; border-left: 2px solid #ededed; border-right: 2px solid #e8e8e8; }
.fold { position: absolute; right: -3px; top: -1px; width: 26px; height: 26px; }
.c1 { height: 274px; border-bottom: 3px solid #c8c8c8; box-shadow: 0 1px 2px #ddd; }
.c2 { margin-top: 25px; height: 120px; }
.side .card { padding: 26px 0 0 15px; }
h2 { margin: 0; font-size: 22px; line-height: 26px; color: #4d4d4d; }
ul { list-style: none; margin: 12px 0 0; padding: 0; font-weight: 600; font-size: 13.3px; line-height: 24px; color: #0054a6; }
li { position: relative; padding-left: 20px; margin-bottom: 10px; }
li::before { content: ""; position: absolute; left: 0; top: 7px; width: 8px; height: 9px; background: #8dc63f; }
.main { flex: 1; }
.banner { height: 49px; background: #27aae1; color: #fff; font-size: 19px; line-height: 46px; padding-left: 10px; box-shadow: 1px 0 6px rgba(0,0,0,.4); }
.article { margin: 20px 1px 0 0; height: 400px; padding: 30px 0 0 20px; font-size: 14px; line-height: 24px; }
p { margin: 0 0 10px; }
.p1 { display: flex; gap: 4px; }
.p1 b { font-weight: 600; font-size: 14px; }
.p2 { margin-bottom: 24px; }
```
FILE: fit.js
```js
// Fit each label to its allotted width: by tracking for .ls, by horizontal scale otherwise.
document.querySelectorAll('.fit').forEach(function (el) {
  var w = parseFloat(el.dataset.w);
  var n = el.getBoundingClientRect().width;
  el.style.width = w + 'px';
  if (!n) return;
  if (el.classList.contains('ls')) {
    el.style.letterSpacing = (w - n) / el.textContent.length + 'px';
    return;
  }
  var holder = document.createElement('span');
  holder.style.display = 'inline-block';
  holder.style.transformOrigin = '0 50%';
  holder.style.transform = 'scaleX(' + (w / n) + ')';
  while (el.firstChild) holder.appendChild(el.firstChild);
  el.appendChild(holder);
});
```
